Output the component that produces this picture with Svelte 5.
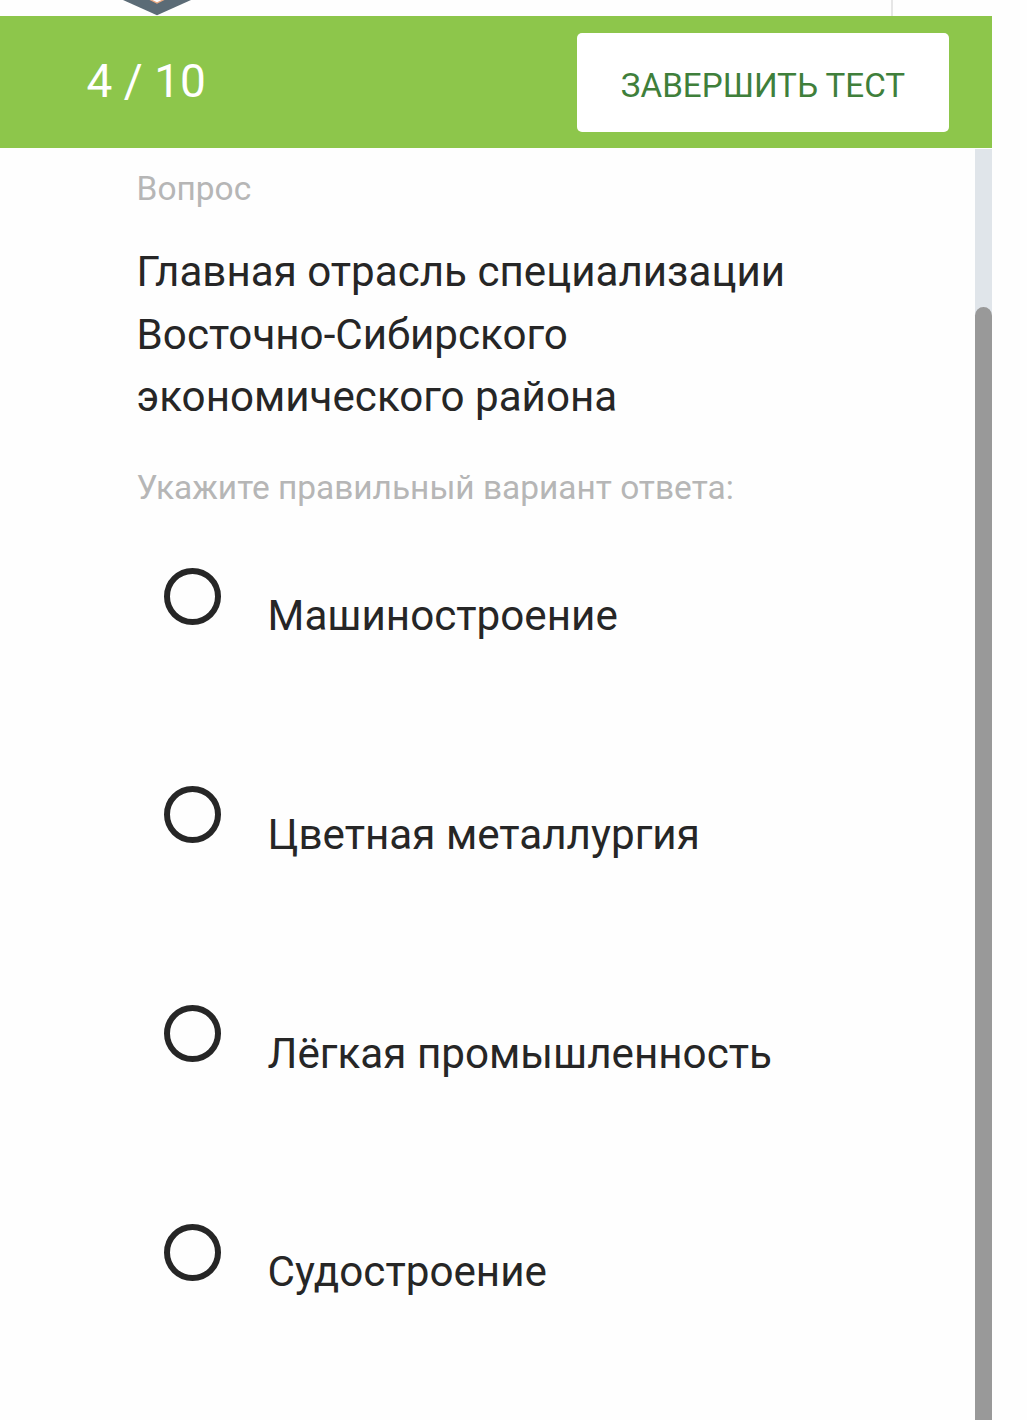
<script>
  let current = 4;
  let total = 10;
  let selected = '';

  const question =
    'Главная отрасль специализации Восточно-Сибирского экономического района';

  const answers = [
    'Машиностроение',
    'Цветная металлургия',
    'Лёгкая промышленность',
    'Судостроение',
  ];
</script>

<div class="page">
  <div class="topbar">
    <svg class="logo" width="68" height="16" viewBox="0 0 68 16">
      <path d="M0 0 L34 15.3 L68 0 Z" fill="#5b6b76" />
      <path d="M26.5 0 L34 3.8 L41.5 0 Z" fill="#e9a983" />
      <path d="M29.5 0 L34 2.2 L38.5 0 Z" fill="#fff" />
    </svg>
    <div class="divider"></div>
  </div>

  <header>
    <div class="counter">{current} / {total}</div>
    <button type="button">Завершить тест</button>
  </header>

  <div class="body">
    <main>
      <p class="hint">Вопрос</p>
      <h1>{question}</h1>
      <p class="hint">Укажите правильный вариант ответа:</p>

      <div class="answers">
        {#each answers as answer}
          <label>
            <input type="radio" name="answer" value={answer} bind:group={selected} />
            <span>{answer}</span>
          </label>
        {/each}
      </div>
    </main>
    <div class="scrollbar">
      <div class="thumb"></div>
    </div>
  </div>
</div>

<style>
  :global(body) {
    background: #fefefe;
  }

  .page {
    display: flex;
    flex-direction: column;
    width: 992px;
    height: 1420px;
    overflow: hidden;
    font-family: Roboto, sans-serif;
    color: #262626;
  }

  .topbar {
    display: flex;
    justify-content: space-between;
    flex-shrink: 0;
    height: 16px;
    padding: 0 99px 0 123px;
  }

  .logo {
    display: block;
  }

  .divider {
    width: 2px;
    background: #e6e6e6;
  }

  header {
    display: flex;
    align-items: center;
    justify-content: space-between;
    flex-shrink: 0;
    box-sizing: border-box;
    height: 132px;
    padding: 0 43px 0 86.5px;
    background: #8dc64b;
  }

  .counter {
    padding-bottom: 2px;
    font-size: 46px;
    line-height: 54px;
    color: #fff;
  }

  button {
    width: 372px;
    height: 99px;
    padding: 6px 0 0;
    border: none;
    border-radius: 5px;
    background: #fff;
    font-family: inherit;
    font-size: 33.2px;
    text-transform: uppercase;
    color: #3f7f3b;
    cursor: pointer;
  }

  .body {
    display: flex;
    flex: 1;
    min-height: 0;
  }

  main {
    flex: 1;
    padding: 21px 170px 0 136.6px;
  }

  .hint {
    margin: 0;
    font-size: 33.45px;
    line-height: 40px;
    color: #b6b6b6;
  }

  h1 {
    margin: 32px 0 39px;
    font-size: 42.15px;
    font-weight: 400;
    line-height: 62.5px;
  }

  .answers {
    padding: 60px 0 0 27.6px;
  }

  label {
    display: flex;
    align-items: flex-start;
    gap: 46.4px;
    height: 218.7px;
  }

  input {
    appearance: none;
    flex-shrink: 0;
    box-sizing: border-box;
    width: 57px;
    height: 57px;
    margin: 0;
    border: 6px solid #262626;
    border-radius: 50%;
  }

  input:checked {
    background: radial-gradient(#262626 40%, transparent 42%);
  }

  label span {
    padding-top: 17.7px;
    font-size: 42.2px;
    line-height: 62px;
    white-space: nowrap;
  }

  .scrollbar {
    width: 17px;
    margin-top: 1px;
    background: #e0e5ea;
  }

  .thumb {
    height: 1200px;
    margin-top: 158px;
    border-radius: 9px;
    background: #999;
  }
</style>
